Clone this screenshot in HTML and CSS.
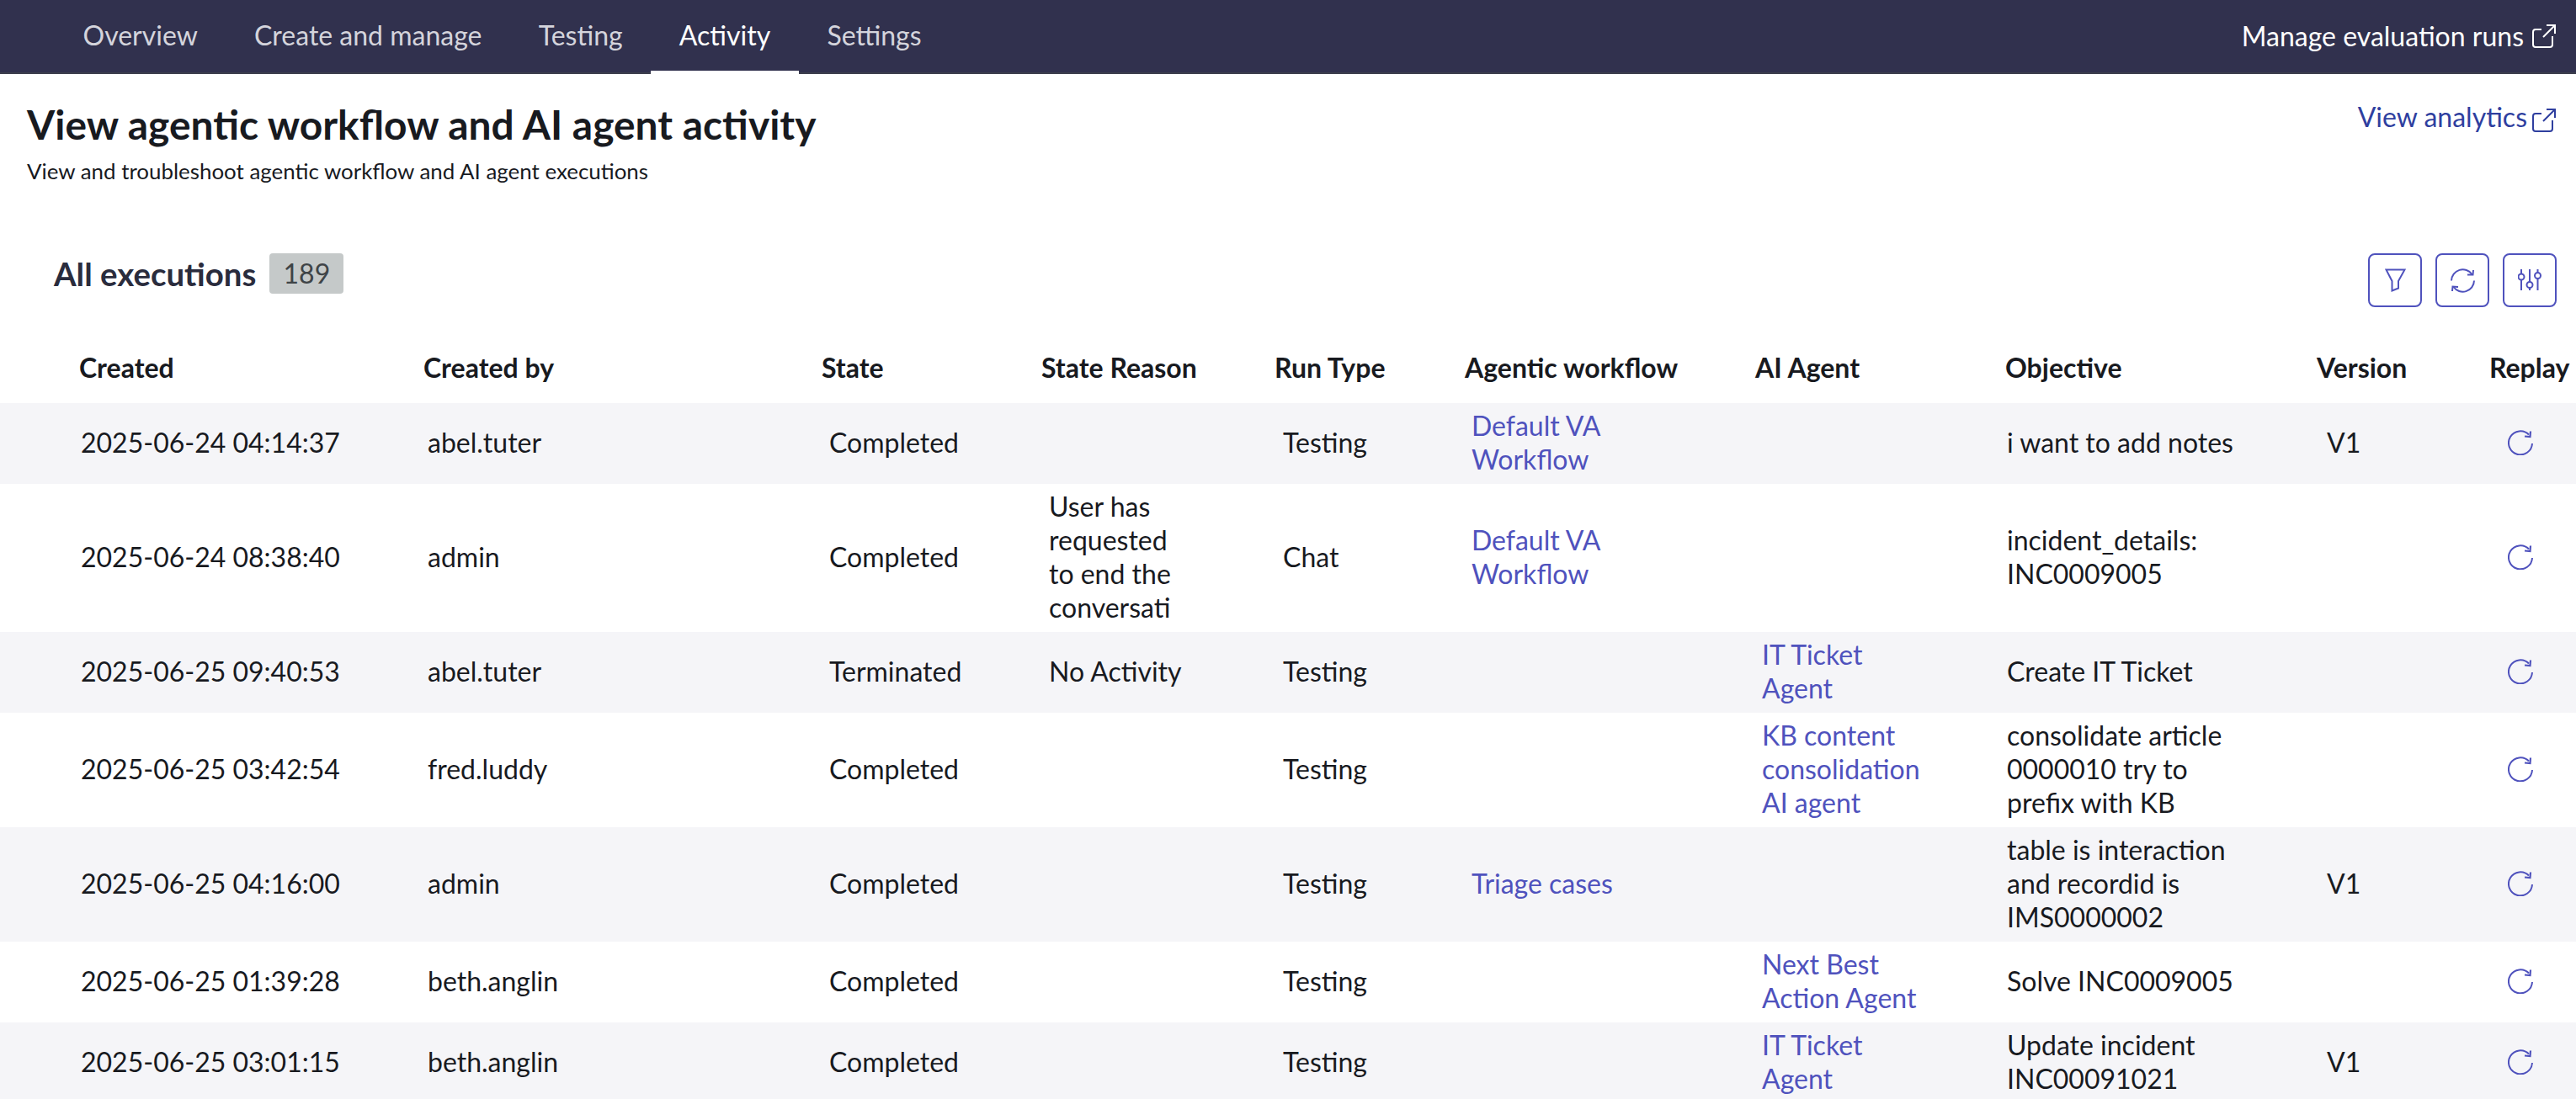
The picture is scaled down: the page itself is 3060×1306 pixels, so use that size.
FILE: index.html
```html
<!DOCTYPE html>
<html lang="en">
<head>
  <meta charset="UTF-8" />
  <title>AI Agent Activity</title>
  <link rel="stylesheet" href="styles.css">
</head>
<body>
  <svg class="defs" width="0" height="0">
    <symbol id="external" viewBox="0 0 28 28">
      <path d="M11 6H4a3 3 0 0 0-3 3v15a3 3 0 0 0 3 3h17a3 3 0 0 0 3-3V14" fill="none" stroke="currentColor" stroke-width="2"/>
      <path d="M13 15L27 1M17 1h10v10" fill="none" stroke="currentColor" stroke-width="2"/>
    </symbol>
    <symbol id="replay" viewBox="0 0 30 30">
      <path d="M29 16A14 14 0 1 1 25 5.500" fill="none" stroke="currentColor" stroke-width="2"/>
      <path d="M27 1.500L26.500 8L20 7.500" fill="none" stroke="currentColor" stroke-width="2.200"/>
    </symbol>
  </svg>

  <nav class="topnav">
    <div class="tabs">
      <a class="tab">Overview</a>
      <a class="tab">Create and manage</a>
      <a class="tab">Testing</a>
      <a class="tab active">Activity</a>
      <a class="tab">Settings</a>
    </div>
    <a class="nav-link">Manage evaluation runs <svg class="ext-icon"><use href="#external"/></svg></a>
  </nav>

  <header class="page-head">
    <div>
      <h1>View agentic workflow and AI agent activity</h1>
      <p>View and troubleshoot agentic workflow and AI agent executions</p>
    </div>
    <a class="analytics-link">View analytics <svg class="ext-icon"><use href="#external"/></svg></a>
  </header>

  <section class="list-head">
    <div class="list-title">
      <h2>All executions</h2>
      <span class="count">189</span>
    </div>
    <div class="tools">
      <button class="tool">
        <svg width="25" height="28" viewBox="0 0 25 28"><path d="M1.500 1.500h22L16 15v8.500l-7.500 3V15z" fill="none" stroke="currentColor" stroke-width="2"/></svg>
      </button>
      <button class="tool">
        <svg width="29" height="29" viewBox="0 0 29 29" fill="none" stroke="currentColor" stroke-width="2">
          <path d="M1 14.500A13.500 13.500 0 0 1 25.500 7"/><path d="M27 2L26.500 7.500L20 7.500"/>
          <path d="M28 14.500A13.500 13.500 0 0 1 3.500 22"/><path d="M2 27L2.500 21.500L9 22"/>
        </svg>
      </button>
      <button class="tool">
        <svg width="28" height="26" viewBox="0 0 28 26" fill="none" stroke="currentColor" stroke-width="2">
          <path d="M4 0v25M14 0v25M23.500 0v25"/>
          <circle cx="4" cy="9" r="3.500" fill="#fff"/><circle cx="14" cy="18.500" r="3.500" fill="#fff"/><circle cx="23.500" cy="7.500" r="3.500" fill="#fff"/>
        </svg>
      </button>
    </div>
  </section>

  <table class="runs">
    <colgroup>
      <col class="w-created"><col class="w-by"><col class="w-state"><col class="w-reason"><col class="w-type">
      <col class="w-flow"><col class="w-agent"><col class="w-obj"><col class="w-ver"><col class="w-replay">
    </colgroup>
    <thead>
      <tr>
        <th>Created</th><th>Created by</th><th>State</th><th>State Reason</th><th>Run Type</th>
        <th>Agentic workflow</th><th>AI Agent</th><th>Objective</th><th>Version</th><th>Replay</th>
      </tr>
    </thead>
    <tbody>
      <tr>
        <td>2025-06-24 04:14:37</td><td>abel.tuter</td><td>Completed</td><td></td><td>Testing</td>
        <td><a>Default VA Workflow</a></td><td></td><td>i want to add notes</td><td>V1</td>
        <td><svg class="replay-icon"><use href="#replay"/></svg></td>
      </tr>
      <tr>
        <td>2025-06-24 08:38:40</td><td>admin</td><td>Completed</td><td>User has requested to end the conversati</td><td>Chat</td>
        <td><a>Default VA Workflow</a></td><td></td><td>incident_details: INC0009005</td><td></td>
        <td><svg class="replay-icon"><use href="#replay"/></svg></td>
      </tr>
      <tr>
        <td>2025-06-25 09:40:53</td><td>abel.tuter</td><td>Terminated</td><td>No Activity</td><td>Testing</td>
        <td></td><td><a>IT Ticket Agent</a></td><td>Create IT Ticket</td><td></td>
        <td><svg class="replay-icon"><use href="#replay"/></svg></td>
      </tr>
      <tr>
        <td>2025-06-25 03:42:54</td><td>fred.luddy</td><td>Completed</td><td></td><td>Testing</td>
        <td></td><td><a>KB content consolidation AI agent</a></td><td>consolidate article 0000010 try to prefix with KB</td><td></td>
        <td><svg class="replay-icon"><use href="#replay"/></svg></td>
      </tr>
      <tr>
        <td>2025-06-25 04:16:00</td><td>admin</td><td>Completed</td><td></td><td>Testing</td>
        <td><a>Triage cases</a></td><td></td><td>table is interaction and recordid is IMS0000002</td><td>V1</td>
        <td><svg class="replay-icon"><use href="#replay"/></svg></td>
      </tr>
      <tr>
        <td>2025-06-25 01:39:28</td><td>beth.anglin</td><td>Completed</td><td></td><td>Testing</td>
        <td></td><td><a>Next Best Action Agent</a></td><td>Solve INC0009005</td><td></td>
        <td><svg class="replay-icon"><use href="#replay"/></svg></td>
      </tr>
      <tr>
        <td>2025-06-25 03:01:15</td><td>beth.anglin</td><td>Completed</td><td></td><td>Testing</td>
        <td></td><td><a>IT Ticket Agent</a></td><td>Update incident INC00091021</td><td>V1</td>
        <td><svg class="replay-icon"><use href="#replay"/></svg></td>
      </tr>
    </tbody>
  </table>
</body>
</html>
```

FILE: styles.css
```css
:root {
  --nav-bg: #31314e;
  --text: #181a1f;
  --link: #4f52bd;
  --link-dark: #2f3f9f;
  --row-alt: #f5f5f8;
}

* { box-sizing: border-box; }

html, body {
  height: 100%;
  overflow: hidden;
}

body {
  margin: 0;
  font-family: "Lato", sans-serif;
  font-size: 32px;
  line-height: 40px;
  color: var(--text);
  background-color: #fff;
}

.defs { position: absolute; }

/* Top nav */
.topnav {
  display: flex;
  justify-content: space-between;
  align-items: stretch;
  height: 88px;
  padding-left: 65px;
  padding-right: 24px;
  background-color: var(--nav-bg);
  border-bottom: 2px solid #3d3f4d;
}

.tabs { display: flex; }

.tab {
  display: flex;
  align-items: center;
  height: 88px;
  padding: 0 33.6px 5px;
  color: #d4d4dc;
}

.tab.active {
  color: #fff;
  border-bottom: 4px solid #fff;
  padding-bottom: 1px;
}

.nav-link {
  display: flex;
  align-items: center;
  gap: 10px;
  color: #fff;
}

.ext-icon {
  width: 28px;
  height: 28px;
}

/* Page header */
.page-head {
  display: flex;
  justify-content: space-between;
  padding: 32px 24px 0 32px;
}

h1 {
  margin: 0;
  font-size: 47.9px;
  line-height: 56px;
  font-weight: 700;
}

.page-head p {
  margin: 11px 0 0;
  font-size: 25.9px;
  line-height: 32px;
}

.analytics-link {
  display: flex;
  align-items: flex-start;
  gap: 6px;
  margin-top: -1px;
  color: var(--link-dark);
  height: 40px;
}

.analytics-link .ext-icon { margin-top: 10px; }

/* List header */
.list-head {
  display: flex;
  justify-content: space-between;
  align-items: flex-start;
  padding: 82px 23px 0 64px;
}

.list-title {
  display: flex;
  align-items: center;
  gap: 16px;
}

h2 {
  margin: 0;
  font-size: 38.4px;
  line-height: 48px;
  font-weight: 700;
  color: #2a2c3d;
}

.count {
  width: 88px;
  height: 48px;
  line-height: 48px;
  text-align: center;
  border-radius: 4px;
  background-color: #c5c9c9;
  color: #3f4447;
}

.tools {
  display: flex;
  gap: 16px;
}

.tool {
  display: flex;
  align-items: center;
  justify-content: center;
  width: 64px;
  height: 64px;
  padding: 0;
  border: 2px solid var(--link);
  border-radius: 8px;
  background: #fff;
  color: var(--link);
}

/* Table */
.runs {
  width: 3060px;
  margin-top: 32px;
  table-layout: fixed;
  border-collapse: collapse;
}

.w-created { width: 503px; }
.w-by { width: 473px; }
.w-state { width: 261px; }
.w-reason { width: 277px; }
.w-type { width: 226px; }
.w-flow { width: 345px; }
.w-agent { width: 297px; }
.w-obj { width: 370px; }
.w-ver { width: 205px; }
.w-replay { width: 103px; }

th {
  height: 82px;
  padding: 0 0 2px;
  text-align: left;
  font-weight: 700;
  white-space: nowrap;
}

th:first-child { padding-left: 94px; }

td {
  padding: 7px 0 9px;
  vertical-align: middle;
}

tbody tr:nth-child(odd) { background-color: var(--row-alt); }

td a { color: var(--link); }

td:nth-child(1) { padding-left: 96px; }
td:nth-child(2) { padding-left: 5px; }
td:nth-child(3) { padding-left: 9px; }
td:nth-child(4) { padding-left: 9px; padding-right: 100px; }
td:nth-child(5) { padding-left: 10px; }
td:nth-child(6) { padding-left: 8px; padding-right: 120px; }
td:nth-child(7) { padding-left: 8px; padding-right: 80px; }
td:nth-child(8) { padding-left: 2px; padding-right: 85px; }
td:nth-child(9) { padding-left: 12px; }
td:nth-child(10) { padding-left: 22px; }

.replay-icon {
  display: block;
  width: 30px;
  height: 30px;
  color: var(--link);
}
```
